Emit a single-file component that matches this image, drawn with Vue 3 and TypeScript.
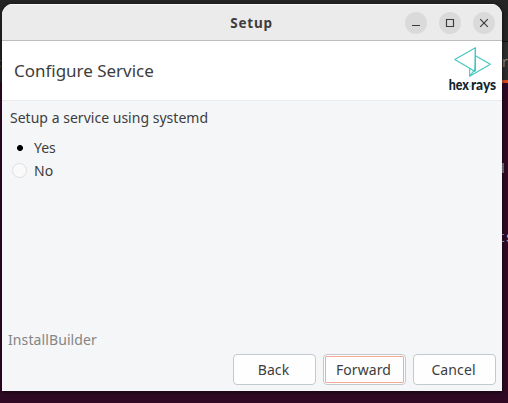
<script setup lang="ts">
import { ref } from 'vue'

const choice = ref<string>('Yes')
const options: string[] = ['Yes', 'No']
const actions = [
  { label: 'Back', primary: false },
  { label: 'Forward', primary: true },
  { label: 'Cancel', primary: false },
]
</script>

<template>
  <div class="desktop">
    <div class="terminal-top"></div>
    <div class="terminal-tab"></div>
    <span class="peek peek-tab">r</span>
    <span class="peek peek-cursor"></span>
    <span class="peek peek-line">ts</span>
    <span class="peek peek-left"></span>
    <main class="window">
      <header class="titlebar">
        <h1>Setup</h1>
        <div class="controls">
          <button class="control" aria-label="Minimize">
            <svg viewBox="0 0 22 22"><path d="M7 13.5h8" /></svg>
          </button>
          <button class="control" aria-label="Maximize">
            <svg viewBox="0 0 22 22"><path d="M7.5 7.5h7v7h-7z" /></svg>
          </button>
          <button class="control" aria-label="Close">
            <svg viewBox="0 0 22 22"><path d="M7.2 7.2l7.6 7.6M14.8 7.2l-7.6 7.6" /></svg>
          </button>
        </div>
      </header>
      <section class="banner">
        <h2>Configure Service</h2>
        <svg class="logo" viewBox="0 0 50 50" role="img">
          <g fill="none" stroke="#45c6c0" stroke-width="1.15" stroke-linejoin="round">
            <path d="M27.4 1.7L6.8 13.4L21.7 22.3L26.8 25.5z" />
            <path d="M27.4 1.7v23.3" />
            <path d="M27.4 9.7L42.3 18.2L21.7 30.2V22.2" />
            <path d="M21.7 30.2L27.1 23.4" />
          </g>
          <text x="0.7" y="44" textLength="20.2" lengthAdjust="spacingAndGlyphs">hex</text>
          <circle cx="22" cy="40.3" r="0.8" fill="#45c6c0" />
          <text x="23" y="44" textLength="25.2" lengthAdjust="spacingAndGlyphs">rays</text>
        </svg>
      </section>
      <section class="content">
        <p class="prompt">Setup a service using systemd</p>
        <div class="options">
          <label v-for="option in options" :key="option" class="option" @click="choice = option">
            <span class="radio" :class="{ checked: choice === option }"></span>
            <span>{{ option }}</span>
          </label>
        </div>
      </section>
      <footer>
        <p class="brand">InstallBuilder</p>
        <div class="actions">
          <button
            v-for="action in actions"
            :key="action.label"
            class="action"
            :class="{ primary: action.primary }"
          ><span>{{ action.label }}</span></button>
        </div>
      </footer>
    </main>
  </div>
</template>

<style>
body {
  margin: 0;
  overflow: hidden;
}
</style>

<style scoped>
* {
  box-sizing: border-box;
}
.desktop {
  position: relative;
  width: 508px;
  height: 403px;
  padding: 4px 6px 12px 2px;
  overflow: hidden;
  background: #300a24;
  font-family: "Noto Sans", "Open Sans", sans-serif;
  font-size: 14px;
  color: #3d3d3d;
}
.terminal-top {
  position: absolute;
  inset: 0 0 auto;
  height: 82px;
  background: #252525;
}
.terminal-tab {
  position: absolute;
  right: 0;
  top: 41px;
  width: 7px;
  height: 42px;
  background: #2d2d2d;
  border-top: 1px solid #111;
  border-bottom: 3px solid #dc4e1d;
}
.peek {
  position: absolute;
  line-height: 16px;
  color: #8a8a8a;
}
.peek-tab {
  left: 502px;
  top: 54px;
}
.peek-cursor {
  left: 502px;
  top: 163px;
  width: 2px;
  height: 10px;
  background: #807a83;
}
.peek-line {
  left: 497px;
  top: 230px;
  font: 14px/16px "Liberation Mono", monospace;
  color: #b6b8d3;
}
.peek-left {
  left: 0;
  top: 60px;
  width: 1px;
  height: 7px;
  border: solid #6b5540;
  border-width: 1px 0;
}
.window {
  position: relative;
  display: flex;
  flex-direction: column;
  width: 500px;
  height: 387px;
  overflow: hidden;
  border-radius: 11px 11px 0 0;
  background: #f4f6f8;
  box-shadow: 0 1px 5px rgba(0, 0, 0, 0.65);
}
.titlebar {
  display: grid;
  grid-template-columns: 1fr auto 1fr;
  align-items: center;
  height: 37px;
  flex: none;
  padding-right: 7px;
  background: #ebebeb;
  border-top: 1px solid #fafafa;
  border-bottom: 1px solid #bdbdbd;
}
h1 {
  grid-column: 2;
  margin: 0 0 0 6px;
  font-size: 13.5px;
  line-height: 20px;
  font-weight: 700;
  letter-spacing: 0.75px;
}
.controls {
  display: flex;
  justify-content: flex-end;
  gap: 12px;
}
.control {
  width: 22px;
  height: 22px;
  padding: 0;
  border: 0;
  border-radius: 50%;
  background: #dadada;
}
.control svg {
  display: block;
  width: 22px;
  height: 22px;
  fill: none;
  stroke: #3b3b3b;
  stroke-width: 1.15;
}
.banner {
  display: flex;
  justify-content: space-between;
  height: 60px;
  flex: none;
  padding: 5px 4px 0 12px;
  background: #fff;
  border-bottom: 1px solid #e9ebed;
}
h2 {
  margin: 13px 0 0;
  font-size: 17px;
  line-height: 24px;
  font-weight: 400;
  letter-spacing: -0.02px;
}
.logo {
  width: 50px;
  height: 50px;
}
.logo text {
  font: 900 14.5px Lato, sans-serif;
  fill: #10252c;
}
.content {
  flex: 1;
  padding: 7px 8px;
}
p {
  margin: 0;
}
.prompt {
  line-height: 20px;
  letter-spacing: 0.02px;
}
.options {
  margin-top: 8px;
}
.option {
  display: flex;
  align-items: center;
  gap: 7px;
  height: 23px;
  padding-left: 2px;
}
.radio {
  width: 15px;
  height: 15px;
  border: 1px solid #dcdedf;
  border-radius: 50%;
  background: #fafafa;
}
.radio.checked {
  border-color: transparent;
  background: radial-gradient(circle at 7px 7px, #000 2.7px, transparent 3.2px);
}
footer {
  padding: 0 6px 6px;
}
.brand {
  line-height: 20px;
  margin-bottom: 4px;
  letter-spacing: 0.1px;
  color: #858585;
}
.actions {
  display: flex;
  justify-content: flex-end;
  gap: 7px;
}
.action {
  width: 83px;
  height: 31px;
  padding: 1px;
  border: 1px solid #c5c8ce;
  border-radius: 4px;
  background: #fefefe;
  color: inherit;
  font: inherit;
}
.action span {
  display: flex;
  align-items: center;
  justify-content: center;
  height: 27px;
  padding-right: 2px;
  letter-spacing: 0.1px;
  border: 1px solid transparent;
}
.action.primary span {
  border-color: #f5aa98;
  border-radius: 1px;
}
</style>
